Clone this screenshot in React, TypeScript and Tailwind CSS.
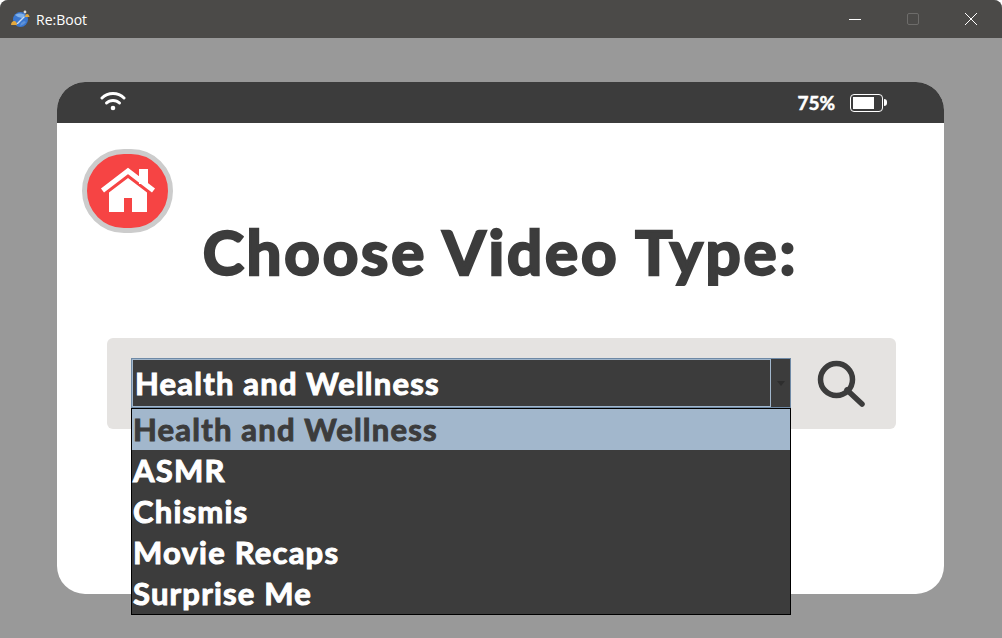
import React from "react";

const font = { fontFamily: '"Lato", "Liberation Sans", sans-serif' };

function AppIcon() {
  return (
    <svg width="20" height="18" viewBox="0 0 20 18" className="shrink-0">
      <circle cx="10.5" cy="9.5" r="7.5" fill="#3a77d0" />
      <path d="M5 5 C8 3 12 3 15 5 L12 8 L8 7 Z" fill="#7fb0e8" />
      <path d="M6 14 L14 6 L15 7 L8 14 Z" fill="#c8def5" />
      <path d="M10 16 C12 15 15 14 16 12 L14 11 L11 13 Z" fill="#5f93d8" />
      <path d="M1 15 C1 12 3 11 4 11 C6 11 7 13 7 15 Z" fill="#e4a83c" />
      <path d="M15 7 C15 5 16 4 17 4 C18.5 4 19.5 5.5 19.5 7 Z" fill="#e4a83c" />
      <circle cx="15" cy="2" r="1.4" fill="#dcdcdc" />
    </svg>
  );
}

function Wifi() {
  return (
    <svg width="26" height="22" viewBox="0 0 26 22" fill="none" stroke="#fff" strokeWidth="3" strokeLinecap="round" className="-mt-[3px]">
      <path d="M2 8 C8 2 18 2 24 8" />
      <path d="M6.5 13 C10 9.5 16 9.5 19.5 13" />
      <circle cx="13" cy="18" r="2.3" fill="#fff" stroke="none" />
    </svg>
  );
}

function Battery() {
  return (
    <div className="flex items-center">
      <div className="flex h-[18px] w-[33px] items-center rounded-[4px] border border-white p-[2px]">
        <div className="h-full w-[21px] bg-white" />
      </div>
      <div className="ml-[1px] h-[7px] w-[3px] rounded-r-[3px] bg-white" />
    </div>
  );
}

function HomeIcon() {
  return (
    <svg width="58" height="50" viewBox="0 0 58 50">
      <path d="M40 3 H49 V18 H40 Z" fill="#fff" />
      <path d="M3.5 24.5 L29 5 L54.5 24.5" fill="none" stroke="#fff" strokeWidth="5" strokeLinecap="butt" />
      <path d="M29 12 L48 26.5 V46 H33 V32 H25 V46 H10 V26.5 Z" fill="#fff" />
    </svg>
  );
}

const options = ["Health and Wellness", "ASMR", "Chismis", "Movie Recaps", "Surprise Me"];

export default function App() {
  return (
    <div className="flex h-[638px] w-[1002px] flex-col overflow-hidden rounded-t-[8px] bg-[#999999]" style={font}>
      <header className="flex h-[38px] shrink-0 items-center bg-[#4b4a48] pl-[10px] text-white">
        <AppIcon />
        <span className="ml-[6px] text-[14px]" style={{ fontFamily: '"Open Sans", sans-serif' }}>Re:Boot</span>
        <div className="ml-auto flex h-full items-center">
          <div className="flex w-[58px] justify-center"><div className="h-px w-[12px] bg-white" /></div>
          <div className="flex w-[58px] justify-center"><div className="h-[12px] w-[12px] rounded-[2px] border border-[#6d6c6a]" /></div>
          <div className="flex w-[60px] justify-center pr-[2px]">
            <svg width="14" height="14" viewBox="0 0 14 14" stroke="#fff" strokeWidth="1"><path d="M1 1 L13 13 M13 1 L1 13" /></svg>
          </div>
        </div>
      </header>
      <main className="flex-1 pl-[58px] pr-[57px] pt-[44px]">
        <section className="relative h-[512px] w-[887px] -translate-x-px rounded-[28px] bg-white">
          <div className="flex h-[41px] items-center rounded-t-[28px] bg-[#3c3c3c] pl-[43px] pr-[57px] text-white">
            <Wifi />
            <span className="ml-auto text-[19px] font-bold leading-none [-webkit-text-stroke:0.5px_currentColor]">75%</span>
            <div className="ml-[15px]"><Battery /></div>
          </div>
          <div className="pl-[25px] pt-[26px]">
            <button className="flex h-[84px] w-[91px] items-center justify-center rounded-full border-[5px] border-[#cccccc] bg-[#f64444]">
              <HomeIcon />
            </button>
          </div>
          <h1 className="mt-[-18px] text-center text-[62px] font-bold leading-[72px] tracking-[2.8px] text-[#3c3c3c] [-webkit-text-stroke:2.5px_currentColor]">Choose Video Type:</h1>
          <div className="ml-[50px] mr-[48px] mt-[51px] flex h-[91px] items-start rounded-[6px] bg-[#e5e3e1] pl-[24px] pt-[20px]">
            <div className="relative flex h-[50px] w-[660px] border border-[#6f8aa6] bg-[#3c3c3c]">
              <div className="flex flex-1 items-center border border-[#a2b7cc] pl-[2px] text-[31px] font-bold leading-none tracking-[1.2px] text-white [-webkit-text-stroke:1px_currentColor]">Health and Wellness</div>
              <div className="flex w-[19px] items-center justify-center">
                <div className="h-0 w-0 border-x-[4px] border-t-[5px] border-x-transparent border-t-[#2e2e2e]" />
              </div>
              <ul className="absolute left-[-1px] top-[49px] z-10 w-[660px] border border-black bg-[#3c3c3c] text-[31px] font-bold tracking-[1.2px] text-white [-webkit-text-stroke:1px_currentColor]">
                {options.map((o, i) => (
                  <li key={o} className={`flex h-[41px] items-center pl-[1px] leading-none ${i === 0 ? "bg-[#a2b7cc] text-[#3c3c3c]" : ""}`}>{o}</li>
                ))}
              </ul>
            </div>
            <svg width="50" height="50" viewBox="0 0 50 50" fill="none" stroke="#3c3c3c" strokeWidth="5.5" strokeLinecap="round" className="ml-[25px] mt-px">
              <circle cx="20.5" cy="20.5" r="16" />
              <path d="M31 31 L46 45" />
            </svg>
          </div>
        </section>
      </main>
    </div>
  );
}
